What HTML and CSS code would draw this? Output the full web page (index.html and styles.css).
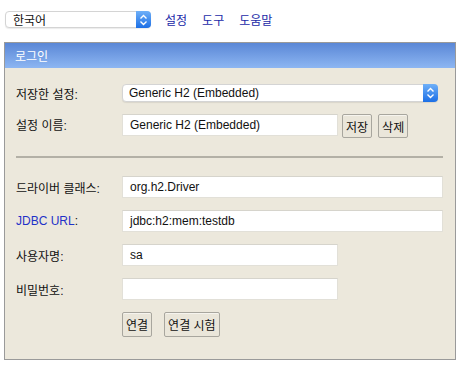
FILE: index.html
```html
<!DOCTYPE html>
<html lang="ko">
<head>
<meta charset="utf-8">
<title>H2 Console</title>
<link rel="stylesheet" href="styles.css">
</head>
<body>
<div class="topbar">
  <div class="select lang">
    <span class="select-text">한국어</span>
    <span class="select-arrow"><svg width="9" height="12" viewBox="0 0 9 12"><path d="M1.5 4.5 L4.5 1.5 L7.5 4.5 M1.5 7.5 L4.5 10.5 L7.5 7.5" fill="none" stroke="#fff" stroke-width="1.4"/></svg></span>
  </div>
  <a class="toplink" href="#">설정</a>
  <a class="toplink" href="#">도구</a>
  <a class="toplink" href="#">도움말</a>
</div>

<div class="panel">
  <div class="panel-head">로그인</div>
  <div class="panel-body">
    <div class="row row-select">
      <span class="label">저장한 설정:</span>
      <div class="select wide">
        <span class="select-text">Generic H2 (Embedded)</span>
        <span class="select-arrow"><svg width="9" height="12" viewBox="0 0 9 12"><path d="M1.5 4.5 L4.5 1.5 L7.5 4.5 M1.5 7.5 L4.5 10.5 L7.5 7.5" fill="none" stroke="#fff" stroke-width="1.4"/></svg></span>
      </div>
    </div>
    <div class="row row-name">
      <span class="label label-top">설정 이름:</span>
      <div class="controls">
        <div class="input short">Generic H2 (Embedded)</div>
        <button class="btn">저장</button>
        <button class="btn">삭제</button>
      </div>
    </div>
    <div class="divider"></div>
    <div class="row">
      <span class="label">드라이버 클래스:</span>
      <div class="input long">org.h2.Driver</div>
    </div>
    <div class="row">
      <span class="label"><a class="jdbc" href="#">JDBC URL</a>:</span>
      <div class="input long">jdbc:h2:mem:testdb</div>
    </div>
    <div class="row">
      <span class="label">사용자명:</span>
      <div class="input short">sa</div>
    </div>
    <div class="row">
      <span class="label">비밀번호:</span>
      <div class="input short"></div>
    </div>
    <div class="row row-buttons">
      <span class="label"></span>
      <div class="controls">
        <button class="btn big">연결</button>
        <button class="btn big">연결 시험</button>
      </div>
    </div>
  </div>
</div>
</body>
</html>
```

FILE: styles.css
```css
* { box-sizing: border-box; }
body {
  margin: 0;
  padding: 11px 0 0 4px;
  background: #fff;
  font-family: "Liberation Sans", "Noto Sans CJK KR", sans-serif;
  font-size: 12px;
  color: #111;
}
.topbar {
  display: flex;
  align-items: center;
  height: 17px;
  margin-left: 1px;
}
.select {
  position: relative;
  display: flex;
  align-items: center;
  background: #fff;
  border: 1px solid #d4d4d4;
  border-radius: 4px;
  box-shadow: 0 1px 1px rgba(0,0,0,0.08);
}
.select-text {
  flex: 1;
  padding-left: 6px;
  white-space: nowrap;
  font-size: 12px;
}
.select-arrow {
  display: flex;
  align-items: center;
  justify-content: center;
  width: 15px;
  align-self: stretch;
  margin: -1px -1px -1px 0;
  border-radius: 0 4px 4px 0;
  background: linear-gradient(#6fb0f8, #1c6fe6);
}
.lang {
  width: 146px;
  height: 17px;
  margin-right: 14px;
}
.lang .select-text { padding-left: 7px; }
.toplink {
  color: #1a2aa8;
  text-decoration: none;
  margin-right: 15px;
  font-size: 12px;
}
.panel {
  margin-top: 14px;
  width: 452px;
  border: 1px solid #9a9a9a;
  background: #ece8dc;
}
.panel-head {
  height: 25px;
  padding-left: 10px;
  display: flex;
  align-items: center;
  color: #fff;
  font-size: 12px;
  background: linear-gradient(#5a87d6, #8db6f2);
}
.panel-body {
  padding: 16px 0 22px 11px;
}
.row {
  display: flex;
  align-items: center;
  height: 22px;
  margin-bottom: 12px;
}
.row-select { height: 18px; margin-bottom: 12px; }
.row-name { height: 24px; margin-bottom: 0; align-items: flex-start; }
.row-buttons { height: 25px; margin-bottom: 0; }
.label {
  width: 106px;
  flex: none;
  white-space: nowrap;
}
.label-top { padding-top: 2px; }
.jdbc {
  color: #1f32c8;
  text-decoration: none;
}
.wide {
  width: 316px;
  height: 18px;
}
.controls {
  display: flex;
  align-items: flex-start;
}
.input {
  height: 22px;
  background: #fff;
  border: 1px solid #e2e0d8;
  border-top-color: #d6d4cc;
  padding: 0 7px;
  display: flex;
  align-items: center;
  font-size: 12px;
  white-space: nowrap;
}
.short { width: 216px; }
.long { width: 321px; }
.btn {
  font-family: "Liberation Sans", "Noto Sans CJK KR", sans-serif;
  font-size: 12px;
  color: #111;
  height: 24px;
  padding: 0 3px;
  margin-left: 4px;
  background: #eae6da;
  border: 1px solid #a8a69e;
  border-radius: 2px;
  box-shadow: inset 0 1px 0 #f6f4ee;
}
.btn + .btn { margin-left: 6px; }
.btn.big { height: 25px; margin-left: 0; }
.btn.big + .btn.big { margin-left: 12px; }
.divider {
  width: 427px;
  height: 2px;
  background: #b3b0a6;
  margin: 18px 0 18px 0;
}
```
